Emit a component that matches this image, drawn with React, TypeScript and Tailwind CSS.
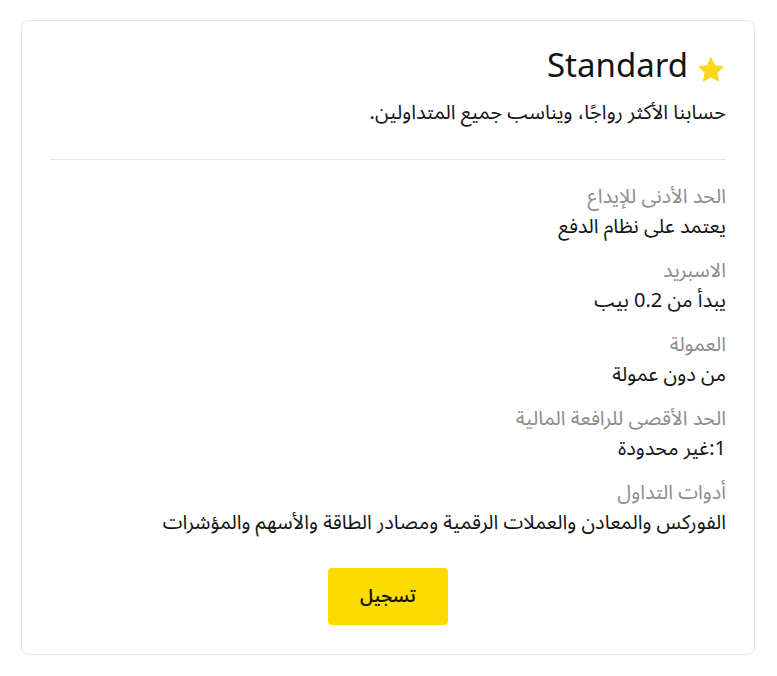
import React from "react";

const rows = [
  ["الحد الأدنى للإيداع", "يعتمد على نظام الدفع"],
  ["الاسبريد", "يبدأ من 0.2 بيب"],
  ["العمولة", "من دون عمولة"],
  ["الحد الأقصى للرافعة المالية", "1:غير محدودة"],
  ["أدوات التداول", "الفوركس والمعادن والعملات الرقمية ومصادر الطاقة والأسهم والمؤشرات"],
];

export default function App() {
  return (
    <div className="w-[777px] h-[676px] bg-white pt-[20px] pl-[21px]" style={{ fontFamily: '"Noto Sans Arabic", "Noto Sans", "DejaVu Sans", sans-serif' }}>
      <div dir="rtl" className="w-[734px] h-[635px] border border-[#e3e3e3] rounded-[8px] pt-[26px] px-[28px]">
        <div className="flex items-center gap-[8px]">
          <svg width="30" height="30" viewBox="0 0 24 24" className="mt-[6px]">
            <path d="M12 2.5l2.9 6.1 6.6.8-4.9 4.6 1.3 6.6L12 17.3l-5.9 3.3 1.3-6.6-4.9-4.6 6.6-.8z" fill="#f9d71c" stroke="#f9d71c" strokeWidth="1" strokeLinejoin="round" />
          </svg>
          <div className="text-[33px] leading-[40px] text-[#141414]">Standard</div>
        </div>
        <div className="mt-[14px] text-[20px] leading-[24px] text-[#141414]">حسابنا الأكثر رواجًا، ويناسب جميع المتداولين.</div>
        <div className="mt-[34px] h-px bg-[#e6e6e6]" />
        <div className="mt-[22px] flex flex-col gap-[14px]">
          {rows.map(([l, v]) => (
            <div key={l} className="flex flex-col">
              <div className="text-[20px] leading-[30px] text-[#8d8d8d]">{l}</div>
              <div className="text-[20px] leading-[30px] text-[#141414]">{v}</div>
            </div>
          ))}
        </div>
        <div className="mt-[30px] flex justify-center">
          <button className="w-[120px] h-[57px] rounded-[4px] bg-[#fcdb00] text-[18px] font-semibold text-[#1a1400]">تسجيل</button>
        </div>
      </div>
    </div>
  );
}
